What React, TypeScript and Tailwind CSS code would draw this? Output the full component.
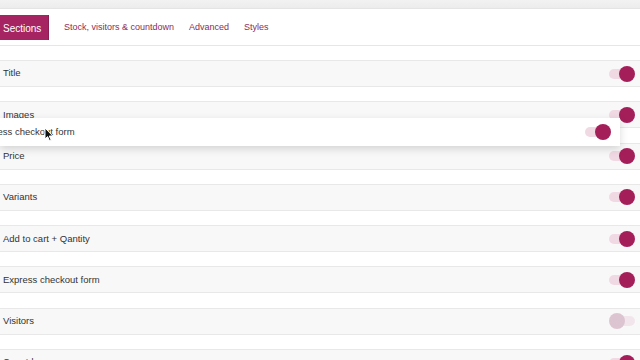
import React from "react";

const rows: { label: string; on: boolean }[] = [
  { label: "Title", on: true },
  { label: "Images", on: true },
  { label: "Price", on: true },
  { label: "Variants", on: true },
  { label: "Add to cart + Qantity", on: true },
  { label: "Express checkout form", on: true },
  { label: "Visitors", on: false },
  { label: "Countdown", on: true },
];

function Toggle({ on }: { on: boolean }) {
  return on ? (
    <div className="relative w-[26px] h-[16px] flex items-center">
      <div className="absolute left-0 right-[2px] h-[10px] rounded-full bg-[#f1d9e3]" />
      <div className="absolute right-0 w-[16px] h-[16px] rounded-full bg-[#a41f5a]" />
    </div>
  ) : (
    <div className="relative w-[26px] h-[16px] flex items-center">
      <div className="absolute left-[2px] right-0 h-[10px] rounded-full bg-[#f2e6ec]" />
      <div className="absolute left-0 w-[16px] h-[16px] rounded-full bg-[#dcc5d1]" />
    </div>
  );
}

export default function App() {
  return (
    <div
      className="relative w-[640px] h-[360px] overflow-hidden bg-white"
      style={{ fontFamily: '"Liberation Sans", Arial, sans-serif' }}
    >
      <div className="h-[9px] bg-gradient-to-b from-[#f2f2f2] to-[#ececec] border-b border-[#e4e4e4]" />
      <div className="h-[37px] bg-white border-b border-[#e6e6e6] flex items-center pt-[1px]">
        <div className="h-[25px] w-[49px] bg-[#a62462] border-r border-[#8d1c50] flex items-center pl-[3px] pt-[1px] text-white text-[10px] font-medium">
          Sections
        </div>
        <div className="flex items-center gap-[15px] ml-[15px] pt-[1px] text-[9px] text-[#8b2c57]">
          <span>Stock, visitors &amp; countdown</span>
          <span>Advanced</span>
          <span>Styles</span>
        </div>
      </div>
      <div className="flex flex-col gap-[14.3px] pt-[14px]">
        {rows.map((r) => (
          <div
            key={r.label}
            className="h-[27px] shrink-0 bg-[#f8f8f8] border-y border-[#e8e8e8] flex items-center justify-between pl-[3px] pr-[5px]"
          >
            <span className="text-[9.5px] font-medium text-[#333]">{r.label}</span>
            <Toggle on={r.on} />
          </div>
        ))}
      </div>

      <div className="absolute left-0 top-[118px] w-[620px] h-[28px] bg-white shadow-[0_3px_8px_rgba(0,0,0,0.15)] flex items-center justify-between pr-[9px] overflow-hidden">
        <span className="ml-[-22px] text-[9.5px] font-medium text-[#333] whitespace-nowrap">
          Express checkout form
        </span>
        <Toggle on={true} />
      </div>

      <svg
        className="absolute left-[44px] top-[127px]"
        width="10"
        height="15"
        viewBox="0 0 10 15"
      >
        <path
          d="M1 1 L1 12 L3.6 9.6 L5.6 14 L7.2 13.3 L5.3 9 L8.8 9 Z"
          fill="#111"
          stroke="#fff"
          strokeWidth="1"
          strokeLinejoin="round"
        />
      </svg>
    </div>
  );
}
